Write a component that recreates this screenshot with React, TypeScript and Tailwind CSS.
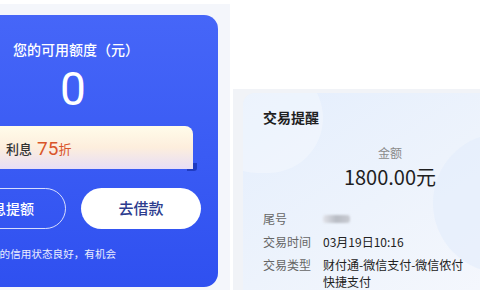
import React from "react";

const font = { fontFamily: '"Noto Sans CJK SC", "Noto Sans", Roboto, sans-serif' };

export default function App() {
  return (
    <div
      className="relative w-[480px] h-[300px] overflow-hidden bg-white flex items-start"
      style={font}
    >
      {/* Left panel */}
      <div className="mt-[4px] w-[230px] h-[286px] shrink-0 bg-[#f4f6fb] pt-[11px]">
        <div className="w-[218px] h-[272px] rounded-r-[14px] bg-gradient-to-b from-[#4666f8] to-[#2f50f0] flex flex-col text-white">
          <div className="pl-[13px] pt-[24px] text-[14px] font-medium leading-[20px]">
            您的可用额度（元）
          </div>
          <div className="w-[146px] text-center text-[46px] font-normal leading-[50px] mt-[5px]" style={{ fontFamily: 'Roboto, "Noto Sans", sans-serif' }}>
            0
          </div>
          <div className="relative mt-[12px] w-[193px] h-[43px]">
            <div className="absolute right-[-4px] bottom-[-2px] w-[10px] h-[8px] rounded-br-[3px] bg-[#1f3bc2]" />
            <div className="relative h-full rounded-tr-[8px] bg-gradient-to-b from-[#fffcea] via-[#fdeedd] to-[#e7def6] flex items-center pl-[6px] pt-[2px]">
              <span className="text-[13px] text-[#333] font-medium">利息</span>
              <span className="ml-[5px] text-[19px] text-[#d9552a] leading-none" style={{ fontFamily: 'Roboto, "Noto Sans", sans-serif' }}>75</span>
              <span className="text-[13px] text-[#d9552a]">折</span>
            </div>
          </div>
          <div className="flex mt-[19px] ml-[-54px] gap-[15px]">
            <div className="w-[120px] h-[41px] rounded-full border border-white/80 flex items-center justify-center text-[14px] font-medium">
              免息提额
            </div>
            <div className="w-[120px] h-[41px] rounded-full bg-white flex items-center justify-center text-[15px] font-medium text-[#2d3c8e]">
              去借款
            </div>
          </div>
          <div className="mt-[17px] ml-[-11px] text-[10.6px] leading-[16px] text-white/90 whitespace-nowrap">
            您的信用状态良好，有机会
          </div>
        </div>
      </div>

      {/* Right panel */}
      <div className="ml-[3px] mt-[89px] h-[201px] w-[300px] shrink-0 bg-[#f1f3f7] pl-[10px] pt-[4px]">
        <div className="relative w-[294px] h-[197px] rounded-tl-[12px] overflow-hidden bg-gradient-to-br from-[#e4eefd] via-[#edf3fc] to-[#f6f8fd]">
          <div className="absolute left-[-40px] top-[-30px] w-[120px] h-[110px] rounded-full bg-white/30" />
          <div className="absolute left-[190px] top-[40px] w-[140px] h-[140px] rounded-full bg-[#e3ecfb]/60" />
          <div className="relative pl-[20px] pt-[14px] text-[14px] font-semibold text-[#1f1f1f] leading-[20px]">
            交易提醒
          </div>
          <div className="relative flex flex-col items-center mt-[18px]">
            <div className="text-[12px] text-[#8a8a8a] leading-[16px]">金额</div>
            <div className="text-[20px] text-[#1f1f1f] leading-[26px] mt-[3px]">1800.00元</div>
          </div>
          <div className="relative pl-[20px] mt-[20px] text-[12px] leading-[17px] flex flex-col gap-[6px]">
            <div className="flex">
              <div className="w-[60px] text-[#666]">尾号</div>
              <div className="flex items-center h-[17px]">
                <div className="w-[27px] h-[8px] rounded-[3px] bg-gradient-to-r from-[#e2e4ea] via-[#b8bcc4] to-[#c9ccd3] blur-[1px]" />
              </div>
            </div>
            <div className="flex">
              <div className="w-[60px] text-[#666]">交易时间</div>
              <div className="text-[#222]">03月19日10:16</div>
            </div>
            <div className="flex">
              <div className="w-[60px] text-[#666]">交易类型</div>
              <div className="text-[#222] whitespace-nowrap">
                财付通-微信支付-微信侬付
                <br />
                快捷支付
              </div>
            </div>
          </div>
        </div>
      </div>
    </div>
  );
}
